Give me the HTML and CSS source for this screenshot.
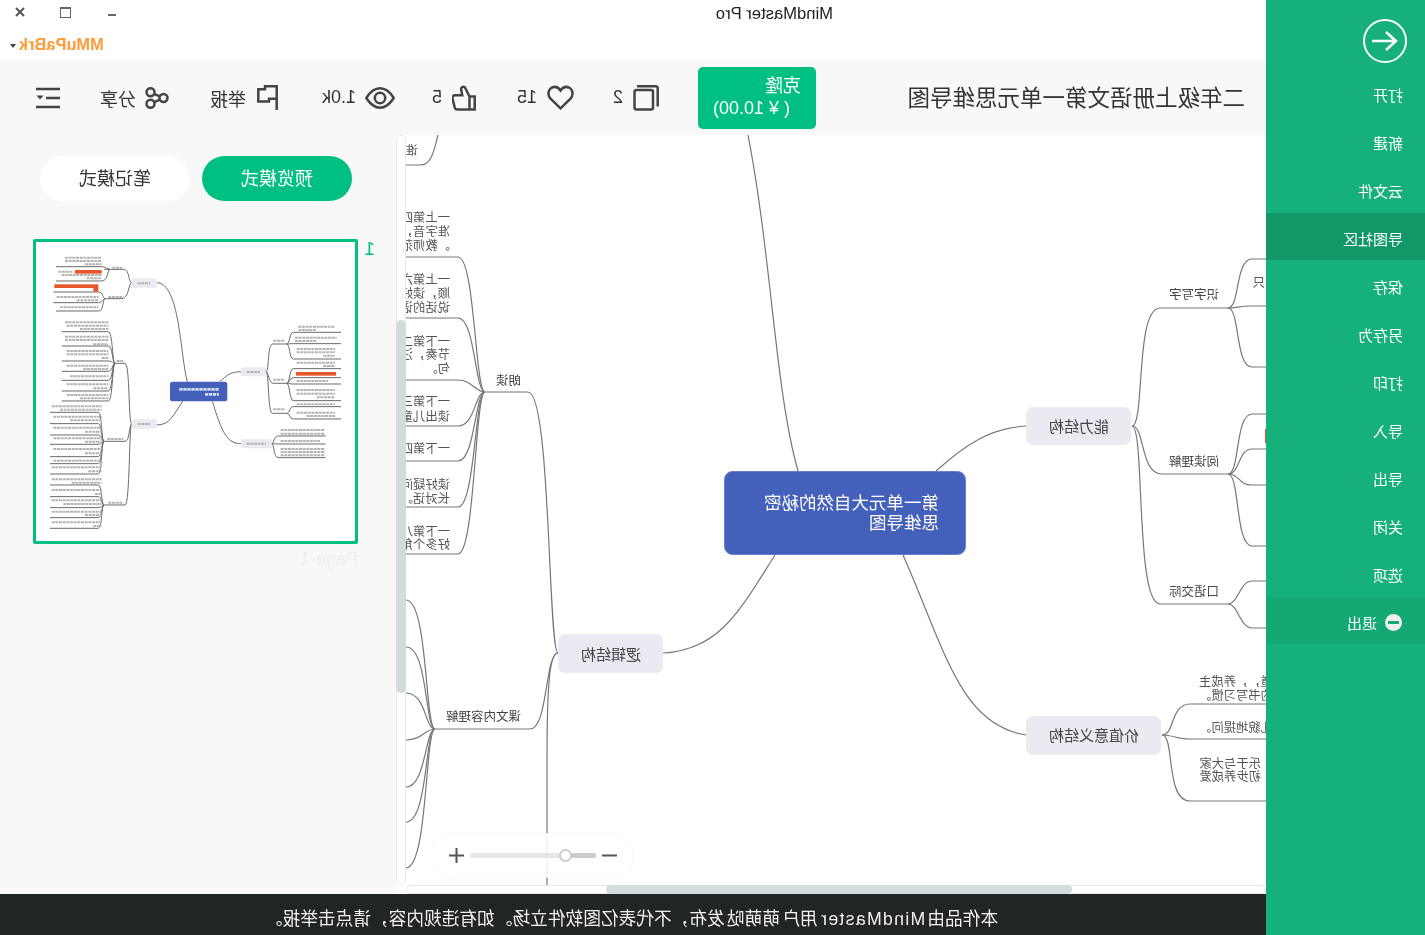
FILE: index.html
```html
<!DOCTYPE html>
<html lang="zh-CN">
<head>
  <meta charset="UTF-8" />
  <title>MindMaster Pro</title>
  <link rel="stylesheet" href="styles.css">
</head>
<body>
<div class="mirror">

  <!-- menu lateral -->
  <aside class="sidebar">
    <div class="back">
      <svg width="44" height="44" viewBox="0 0 44 44" class="back-icon">
        <circle cx="22" cy="22" r="21"/>
        <path class="back-arrow" d="M35 22H10.5M21 13l-10 9 10 9"/>
      </svg>
    </div>
    <div class="side-item">打开</div>
    <div class="side-item">新建</div>
    <div class="side-item">云文件</div>
    <div class="side-item active">导图社区</div>
    <div class="side-item">保存</div>
    <div class="side-item">另存为</div>
    <div class="side-item">打印</div>
    <div class="side-item">导入</div>
    <div class="side-item">导出</div>
    <div class="side-item">关闭</div>
    <div class="side-item">选项</div>
    <div class="side-item exit"><span class="exit-icon"></span>退出</div>
  </aside>

  <main class="main">
    <div class="titlebar">
      <div class="title-row">
        <span class="app-name">MindMaster Pro</span>
        <div class="win-btns">
          <span class="win-min"></span>
          <span class="win-max"></span>
          <svg class="win-close" width="10" height="10" viewBox="0 0 10 10"><path d="M1 1l8 8M9 1l-8 8"/></svg>
        </div>
      </div>
      <div class="user-row">
        <span class="user-name">MMuPaBrk</span>
        <span class="caret"></span>
      </div>
    </div>

    <div class="toolbar">
      <div class="doc-title">二年级上册语文第一单元思维导图</div>
      <div class="clone">
        <span class="clone-name">克隆</span>
        <span class="clone-price">( ¥ 10.00)</span>
      </div>
      <div class="tool t-copy">
        <svg class="ico" width="26" height="26" viewBox="0 0 26 26"><rect x="6" y="5" width="18.5" height="19.5" rx="2"/><path d="M22 1.3H3a1.7 1.7 0 0 0-1.7 1.7v18.5"/></svg>
        <span>2</span>
      </div>
      <div class="tool t-heart">
        <svg class="ico" width="27" height="25" viewBox="0 0 27 25"><path d="M13.5 23.3L3.5 13.6C.2 10 1 4.5 5 2.5c3.5-1.5 6.5 0 8.5 3 2-3 5-4.5 8.5-3 4 2 4.8 7.5 1.5 11.1z"/></svg>
        <span>15</span>
      </div>
      <div class="tool t-thumb">
        <svg class="ico" width="24" height="26" viewBox="0 0 24 26"><path d="M6.5 11.5H1.3v13h5.2zM6.5 11.5L11 2.5c2-1.8 4.3-.3 3.8 2.5l-1 5.3H21c1.8 0 2.9 1.5 2.5 3.2l-2.2 9c-.4 1.5-1.3 2-2.8 2h-12"/></svg>
        <span>5</span>
      </div>
      <div class="tool t-eye">
        <svg class="ico" width="30" height="22" viewBox="0 0 30 22"><path d="M1.3 11C6 3.5 10.5 1.3 15 1.3S24 3.5 28.7 11C24 18.5 19.5 20.7 15 20.7S6 18.5 1.3 11z"/><circle cx="15" cy="11" r="5.2"/></svg>
        <span>1.0k</span>
      </div>
      <div class="tool t-flag">
        <svg class="ico" width="21" height="25" viewBox="0 0 21 25"><path d="M1.3 25V1.3H13v3h6.7v12.2H9v-2.7H1.3"/></svg>
        <span>举报</span>
      </div>
      <div class="tool t-share">
        <svg class="ico" width="24" height="22" viewBox="0 0 24 22"><circle cx="5.5" cy="11" r="4"/><circle cx="18.5" cy="5.2" r="4"/><circle cx="18.5" cy="16.8" r="4"/><path d="M9.2 9.3l5.6-2.5M9.2 12.7l5.6 2.5"/></svg>
        <span>分享</span>
      </div>
      <svg class="ico" width="24" height="22" viewBox="0 0 24 22"><path d="M0 2h24M0 11h14M0 20h24"/><path class="ico-fill" d="M16.5 8.5h7l-3.5 4z"/></svg>
    </div>

    <div class="workspace">
      <div class="canvas-area">
        <div class="canvas">
          <svg class="map" width="860" height="750" viewBox="0 0 860 750">
            <!-- ramas, escritas en las coordenadas de la captura -->
            <g class="links" transform="translate(1266 -135) scale(-1 1)">
              <path d="M798 471C775 390 772 260 748 135"/>
              <path d="M663 653C720 650 740 610 775 555"/>
              <path d="M1026 426C990 428 965 445 936 471"/>
              <path d="M1026 735C960 725 945 650 903 555"/>

              <path d="M558 653C548 653 551 392 528 392H485"/>
              <path d="M558 653C545 653 548 729 530 729H435"/>
              <path d="M558 653C550 653 547 680 547 760V885"/>
              <path d="M406 165H420C432 165 434 150 438 135"/>

              <path d="M485 392C475 392 475 257 458 257H406"/>
              <path d="M485 392C475 392 475 318 458 318H406"/>
              <path d="M485 392C475 392 472 380 458 380H406"/>
              <path d="M485 392C475 392 475 426 458 426H406"/>
              <path d="M485 392C475 392 475 461 458 461H406"/>
              <path d="M485 392C475 392 475 507 458 507H406"/>
              <path d="M485 392C475 392 475 554 458 554H406"/>

              <path d="M435 729C425 729 428 600 406 600"/>
              <path d="M435 729C425 729 428 647 406 647"/>
              <path d="M435 729C425 729 426 693 406 693"/>
              <path d="M435 729C425 729 422 740 406 740"/>
              <path d="M435 729C425 729 426 787 406 787"/>
              <path d="M435 729C425 729 428 822 406 822"/>
              <path d="M435 729C425 729 428 868 406 868"/>

              <path d="M1132 426C1145 426 1135 308 1160 308H1228"/>
              <path d="M1132 426C1145 426 1140 474 1162 474H1228"/>
              <path d="M1132 426C1145 426 1135 604 1160 604H1228"/>

              <path d="M1228 308C1240 308 1235 259 1252 259H1266"/>
              <path d="M1228 308C1236 308 1240 306 1250 306H1266"/>
              <path d="M1228 308C1240 308 1235 367 1252 367H1266"/>

              <path d="M1228 474C1240 474 1235 414 1252 414H1266"/>
              <path d="M1228 474C1240 474 1238 449 1252 449H1266"/>
              <path d="M1228 474C1240 474 1238 485 1252 485H1266"/>
              <path d="M1228 474C1240 474 1235 546 1252 546H1266"/>

              <path d="M1228 604C1238 604 1240 581 1252 581H1266"/>
              <path d="M1228 604C1238 604 1240 628 1252 628H1266"/>

              <path d="M1162 735C1175 735 1170 704 1190 704H1266"/>
              <path d="M1162 735C1172 735 1178 739 1188 739H1266"/>
              <path d="M1162 735C1175 735 1165 801 1190 801H1266"/>
            </g>

            <rect class="cut-mark" x="0" y="294" width="1" height="14"/>

            <rect class="root" x="300.5" y="336.5" width="241" height="83" rx="8"/>
            <rect class="branch" x="603" y="499" width="105" height="39" rx="7"/>
            <rect class="branch" x="135" y="272" width="105" height="38" rx="7"/>
            <rect class="branch" x="105" y="581" width="135" height="39" rx="7"/>

            <text class="root-text" x="327" y="374">第一单元大自然的秘密</text>
            <text class="root-text" x="327" y="394">思维导图</text>
            <text class="branch-text" x="625" y="525">逻辑结构</text>
            <text class="branch-text" x="157" y="297">能力结构</text>
            <text class="branch-text" x="127" y="606">价值意义结构</text>

            <text class="sub-text" x="745" y="249.5">朗读</text>
            <text class="sub-text" x="745" y="585.5">课文内容理解</text>
            <text class="sub-text" x="47" y="163.5">识字写字</text>
            <text class="sub-text" x="47" y="330.5">阅读理解</text>
            <text class="sub-text" x="47" y="460.5">口语交际</text>

            <text class="leaf" x="848" y="19.5">谁</text>
            <text class="leaf" x="816" y="86.5">一上第四课</text>
            <text class="leaf" x="816" y="100.5">准字音，读</text>
            <text class="leaf" x="816" y="114.5">。教师范读</text>
            <text class="leaf" x="816" y="148.5">一上第六课</text>
            <text class="leaf" x="816" y="162.5">顺，读好长</text>
            <text class="leaf" x="816" y="176.5">说话的语气</text>
            <text class="leaf" x="816" y="210.5">一下第二课</text>
            <text class="leaf" x="816" y="223.5">节奏，注意</text>
            <text class="leaf" x="816" y="237.5">句。</text>
            <text class="leaf" x="816" y="270.5">一下第三课</text>
            <text class="leaf" x="816" y="285.5">读出儿童的</text>
            <text class="leaf" x="816" y="317.5">一下第四课</text>
            <text class="leaf" x="816" y="353.5">读好疑问句</text>
            <text class="leaf" x="816" y="367.5">长对话。</text>
            <text class="leaf" x="816" y="400.5">一下第八课</text>
            <text class="leaf" x="816" y="413.5">好多个角色</text>

            <text class="leaf" x="1" y="151.5">只</text>
            <text class="leaf" x="-7" y="550.5">道，，养成主</text>
            <text class="leaf" x="-7" y="564.5">的书写习惯。</text>
            <text class="leaf" x="-7" y="596.5">礼貌地提问。</text>
            <text class="leaf" x="5" y="632.5">乐于与大家</text>
            <text class="leaf" x="5" y="645.5">初步养成爱</text>
          </svg>

          <div class="zoom-ctrl">
            <svg class="zoom-sign" width="15" height="15" viewBox="0 0 15 15"><path d="M0 7.5h15"/></svg>
            <div class="zoom-track">
              <div class="zoom-fill"></div>
              <div class="zoom-knob"></div>
            </div>
            <svg class="zoom-sign" width="15" height="15" viewBox="0 0 15 15"><path d="M0 7.5h15M7.5 0v15"/></svg>
          </div>
        </div>
        <div class="vbar"><div class="vbar-thumb"></div></div>
        <div class="hbar"><div class="hbar-thumb"></div></div>
      </div>

      <div class="pages">
        <div class="mode-btns">
          <div class="mode-btn on">预览模式</div>
          <div class="mode-btn">笔记模式</div>
        </div>
        <div class="page-row">
          <span class="page-no">1</span>
          <div>
            <div class="thumb">
              <svg class="thumb-map" width="319" height="299" viewBox="0 0 319 299">
                <g transform="translate(325 -7) scale(-0.3333 0.3333)">
                  <g class="th-links">
                    <path d="M472 440C450 360 450 143 380 143M458 499C430 540 420 570 380 570M570 440C590 420 605 410 633 410M547 499C575 590 590 626 633 626"/>
                    <path d="M305 143C295 143 300 103 280 103H222M305 143C295 143 298 191 275 191H222"/>
                    <path d="M240 103C232 103 228 95 215 95H78M240 103C232 103 235 138 215 138H78"/>
                    <path d="M225 191C218 191 220 171 205 171H70M225 191C218 191 218 203 205 203H70M225 191C218 191 222 228 205 228H78"/>
                    <path d="M305 567C295 567 300 385 285 385H255M305 567C297 567 300 619 285 619H222M305 567C297 567 300 810 285 810H222"/>
                    <path d="M255 385C247 385 248 290 235 290H95M255 385C247 385 248 333 235 333H95M255 385C247 385 248 378 235 378H95M255 385C247 385 248 409 235 409H95M255 385C247 385 248 436 235 436H95M255 385C247 385 248 468 235 468H95M255 385C247 385 248 498 235 498H95"/>
                    <path d="M222 619C214 619 216 532 205 532H60M222 619C214 619 216 566 205 566H60M222 619C214 619 216 600 205 600H60M222 619C214 619 216 628 205 628H60M222 619C214 619 216 665 205 665H60M222 619C214 619 216 686 205 686H60M222 619C214 619 216 717 205 717H60"/>
                    <path d="M222 810C214 810 216 750 205 750H60M222 810C214 810 216 785 205 785H60M222 810C214 810 216 818 205 818H60M222 810C214 810 216 848 205 848H60M222 810C214 810 216 880 205 880H60"/>
                    <path d="M708 410C718 410 712 327 728 327H770M708 410C716 410 716 445 730 445H770M708 410C718 410 712 535 728 535H770"/>
                    <path d="M770 327C780 327 778 292 790 292H933M770 327C780 327 778 326 790 326H933M770 327C780 327 778 372 790 372H933"/>
                    <path d="M770 445C780 445 778 401 790 401H933M770 445C780 445 778 428 790 428H933M770 445C780 445 778 447 790 447H933M770 445C780 445 778 497 790 497H933"/>
                    <path d="M770 535C780 535 778 515 790 515H933M770 535C780 535 778 552 790 552H933"/>
                    <path d="M725 626C733 626 730 603 745 603H887M725 626C733 626 735 627 745 627H887M725 626C733 626 730 668 745 668H887"/>
                  </g>
                  <rect class="th-root" x="420" y="440" width="172" height="59" rx="8"/>
                  <rect class="th-box" x="305" y="130" width="75" height="28" rx="4"/>
                  <rect class="th-box" x="305" y="553" width="75" height="28" rx="4"/>
                  <rect class="th-box" x="633" y="397" width="75" height="27" rx="4"/>
                  <rect class="th-box" x="633" y="612" width="92" height="28" rx="4"/>
                  <path class="th-root-text" d="M448 463H567M525 478H567"/>
                  <path class="th-words" d="M323 145H360M323 567H360M650 411H690M650 626H708M247 98H277M235 186H277M260 378H280M232 612H280M235 803H280M730 317H765M730 434H765M730 523H765"/>
                  <path class="th-words" d="M105 68H215M105 78H215M165 88H215M85 110H130M95 120H215M170 130H215M80 186H205M140 196H205M90 217H205"/>
                  <path class="th-words" d="M105 262H235M110 272H235M150 282H235M105 305H235M105 315H235M190 328H235M110 348H235M110 358H235M215 369H235M110 392H235M160 402H235M120 424H235M110 448H235M190 460H235M110 480H235M150 490H235"/>
                  <path class="th-words" d="M65 514H215M90 524H215M70 545H215M120 556H215M70 578H215M165 590H215M70 610H215M165 620H215M70 642H215M165 655H215M70 677H215M65 697H215M175 709H215"/>
                  <path class="th-words" d="M65 733H215M125 743H215M65 765H215M195 777H215M65 796H215M100 807H215M65 830H215M165 840H215M65 862H215M190 873H215"/>
                  <path class="th-words" d="M805 275H915M805 285H860M795 308H920M795 318H860M800 342H915M800 352H915M880 362H915M800 383H915M880 393H915M800 438H895M800 465H915M800 476H915M860 487H915M800 508H915M800 533H915M830 543H915"/>
                  <path class="th-words" d="M752 585H885M752 596H885M752 618H870M752 642H885M752 651H885M752 661H885"/>
                  <rect class="th-mark" x="135" y="105" width="80" height="11"/>
                  <rect class="th-mark" x="73" y="148" width="132" height="11"/>
                  <rect class="th-mark" x="190" y="159" width="15" height="11"/>
                  <rect class="th-mark" x="798" y="411" width="120" height="11"/>
                </g>
              </svg>
            </div>
            <div class="page-name">Page-1</div>
          </div>
        </div>
      </div>
    </div>

    <footer class="notice">本作品由 <span class="notice-app">MindMaster</span> 用户 萌萌哒 发布，不代表亿图软件立场。如有违规内容，请点击举报。</footer>
  </main>
</div>
</body>
</html>
```

FILE: styles.css
```css
body {
  margin: 0;
  background-color: #fff;
  font-family: "Liberation Sans", "Noto Sans CJK SC", sans-serif;
  overflow: hidden;
}

/* la captura esta reflejada en horizontal */
.mirror {
  width: 1425px;
  height: 935px;
  display: flex;
  transform: scaleX(-1);
}

.sidebar {
  width: 159px;
  flex: none;
  background-color: #16b17a;
  color: #fff;
}

.back {
  height: 69px;
  box-sizing: border-box;
  padding: 19px 0 0 18px;
}

.back-icon {
  display: block;
  fill: none;
  stroke: #fff;
  stroke-width: 2;
}

.back-arrow {
  stroke-width: 2.5;
}

.side-item {
  height: 47px;
  margin-bottom: 1px;
  padding: 3px 0 0 22px;
  box-sizing: border-box;
  display: flex;
  align-items: center;
  font-size: 15px;
}

.side-item.active {
  background-color: #129767;
}

.side-item.exit {
  background-color: #14a972;
}

.exit-icon {
  width: 17px;
  height: 17px;
  margin: 0 8px 0 1px;
  border-radius: 50%;
  background-color: #eee;
  display: flex;
  align-items: center;
  justify-content: center;
}

.exit-icon::after {
  content: "";
  width: 11px;
  height: 3px;
  background-color: #14a972;
}

.main {
  width: 1266px;
  display: flex;
  flex-direction: column;
}

.titlebar {
  height: 60px;
  background-color: #fff;
}

.title-row {
  height: 28px;
  display: flex;
  align-items: center;
  padding: 0 15px 0 433px;
}

.app-name {
  font-size: 16.6px;
  color: #222;
}

.win-btns {
  margin-left: auto;
  display: flex;
  align-items: center;
  margin-top: -2px;
}

.win-min {
  width: 8px;
  height: 2px;
  margin: 3px 37px 0 0;
  background-color: #666;
}

.win-max {
  width: 9px;
  height: 8px;
  margin: -2px 35px 0 0;
  border: 1px solid #666;
  border-top-width: 2px;
}

.win-close {
  margin-top: -2px;
  fill: none;
  stroke: #555;
  stroke-width: 2;
}

.user-row {
  padding: 7px 10px 0 0;
  display: flex;
  justify-content: flex-end;
  align-items: center;
}

.user-name {
  font-size: 16.4px;
  font-weight: bold;
  color: #ff9b3a;
}

.caret {
  margin: 2px 0 0 3px;
  border-top: 4px solid #445;
  border-left: 3.5px solid transparent;
  border-right: 3.5px solid transparent;
}

.toolbar {
  height: 75px;
  padding-left: 21px;
  display: flex;
  align-items: center;
  background-color: #f8f8f8;
  color: #333;
  font-size: 18px;
}

.doc-title {
  width: 429px;
  margin-top: -4px;
  font-size: 22.5px;
  flex: none;
  white-space: nowrap;
}

.clone {
  width: 118px;
  height: 62px;
  margin: 0 39px 0 0;
  box-sizing: border-box;
  padding: 8px 0 0 15px;
  border-radius: 5px;
  background-color: #00bf83;
  color: #fff;
  flex: none;
  line-height: 22px;
}

.clone-name {
  display: block;
}

.clone-price {
  display: block;
  padding-left: 11px;
  white-space: nowrap;
}

.tool {
  display: flex;
  align-items: center;
  gap: 10px;
  flex: none;
}

.t-copy { width: 85px; }
.t-heart { width: 98px; }
.t-thumb { width: 81px; }
.t-eye { width: 117px; gap: 9px; }
.t-flag { width: 109px; gap: 11px; }
.t-share { width: 109px; gap: 9px; }

.ico {
  flex: none;
  fill: none;
  stroke: #444;
  stroke-width: 2.5;
}

.ico-fill {
  fill: #444;
  stroke: none;
}

.workspace {
  flex: 1;
  display: flex;
  min-height: 0;
}

.canvas-area {
  width: 870px;
  display: grid;
  grid-template-columns: 860px 10px;
  grid-template-rows: 750px 9px;
  background-color: #fff;
}

.canvas {
  position: relative;
  overflow: hidden;
}

.map {
  display: block;
}

.links path {
  fill: none;
  stroke: #777;
  stroke-width: 1.2;
}

.cut-mark {
  fill: #e8562a;
}

.root {
  fill: #4360bb;
  stroke: #6880cc;
}

.branch {
  fill: #e9eaf2;
}

.root-text {
  font-size: 17.5px;
  fill: #fff;
}

.branch-text {
  font-size: 15px;
  fill: #444;
}

.sub-text {
  font-size: 12.5px;
  fill: #444;
}

.leaf {
  font-size: 12.33px;
  fill: #555;
  text-spacing-trim: space-all;
}

.zoom-ctrl {
  position: absolute;
  left: 633px;
  top: 698px;
  width: 201px;
  height: 45px;
  box-sizing: border-box;
  padding: 0 17px 0 16px;
  display: flex;
  align-items: center;
  gap: 6px;
  border-radius: 23px;
  background-color: rgba(255, 255, 255, 0.88);
  box-shadow: 0 0 3px rgba(0, 0, 0, 0.06);
}

.zoom-sign {
  flex: none;
  fill: none;
  stroke: #555;
  stroke-width: 2;
}

.zoom-track {
  flex: 1;
  height: 5px;
  position: relative;
  border-radius: 3px;
  background-color: #e6e6e6;
}

.zoom-fill {
  width: 30px;
  height: 5px;
  border-radius: 3px;
  background-color: #ccc;
}

.zoom-knob {
  position: absolute;
  left: 24px;
  top: -4px;
  width: 9px;
  height: 9px;
  border: 2px solid #ccc;
  border-radius: 50%;
  background-color: #fff;
}

.vbar {
  box-sizing: border-box;
  border: 1px solid #e8e8e8;
  border-radius: 5px;
  background-color: #fff;
  padding-top: 184px;
}

.vbar-thumb {
  height: 373px;
  margin: 0 -1px;
  border-radius: 5px;
  background-color: #d2dcdc;
}

.hbar {
  box-sizing: border-box;
  border: 1px solid #e8e8e8;
  border-radius: 5px;
  padding-left: 193px;
}

.hbar-thumb {
  width: 466px;
  height: 9px;
  margin-top: -1px;
  border-radius: 5px;
  background-color: #d2dcdc;
}

.pages {
  flex: 1;
  background-color: #f8f8f8;
}

.mode-btns {
  padding: 21px 0 0 44px;
  display: flex;
  gap: 12px;
}

.mode-btn {
  width: 150px;
  height: 45px;
  border-radius: 23px;
  background-color: #fff;
  color: #333;
  font-size: 18px;
  line-height: 47px;
  text-align: center;
}

.mode-btn.on {
  background-color: #00bf83;
  color: #fff;
}

.page-row {
  margin-top: 38px;
  padding-left: 21px;
  display: flex;
}

.page-no {
  width: 17px;
  flex: none;
  color: #00bf83;
  font-size: 19px;
  line-height: 20px;
}

.thumb {
  width: 325px;
  height: 305px;
  box-sizing: border-box;
  border: 3px solid #00bf83;
  border-radius: 2px;
  background-color: #fff;
}

.thumb-map {
  display: block;
  filter: blur(0.6px);
}

.th-links {
  fill: none;
  stroke: #6a6a6a;
  stroke-width: 3;
}

.th-root {
  fill: #4360bb;
}

.th-box {
  fill: #e9eaf2;
}

.th-root-text {
  fill: none;
  stroke: #d5dcf2;
  stroke-width: 8;
  stroke-dasharray: 10 2;
}

.th-words {
  fill: none;
  stroke: #b4b4b4;
  stroke-width: 6;
  stroke-dasharray: 9 2;
}

.th-mark {
  fill: #e8562a;
}

.page-name {
  margin-top: 5px;
  color: #eee;
  font-size: 18px;
}

.notice {
  height: 41px;
  flex: none;
  padding-left: 3px;
  box-sizing: border-box;
  background-color: #212526;
  color: #f0f0f0;
  font-size: 17.7px;
  line-height: 51px;
  word-spacing: -2.7px;
  text-align: center;
  white-space: nowrap;
  overflow: hidden;
}

.notice-app {
  letter-spacing: 1.3px;
}
```
